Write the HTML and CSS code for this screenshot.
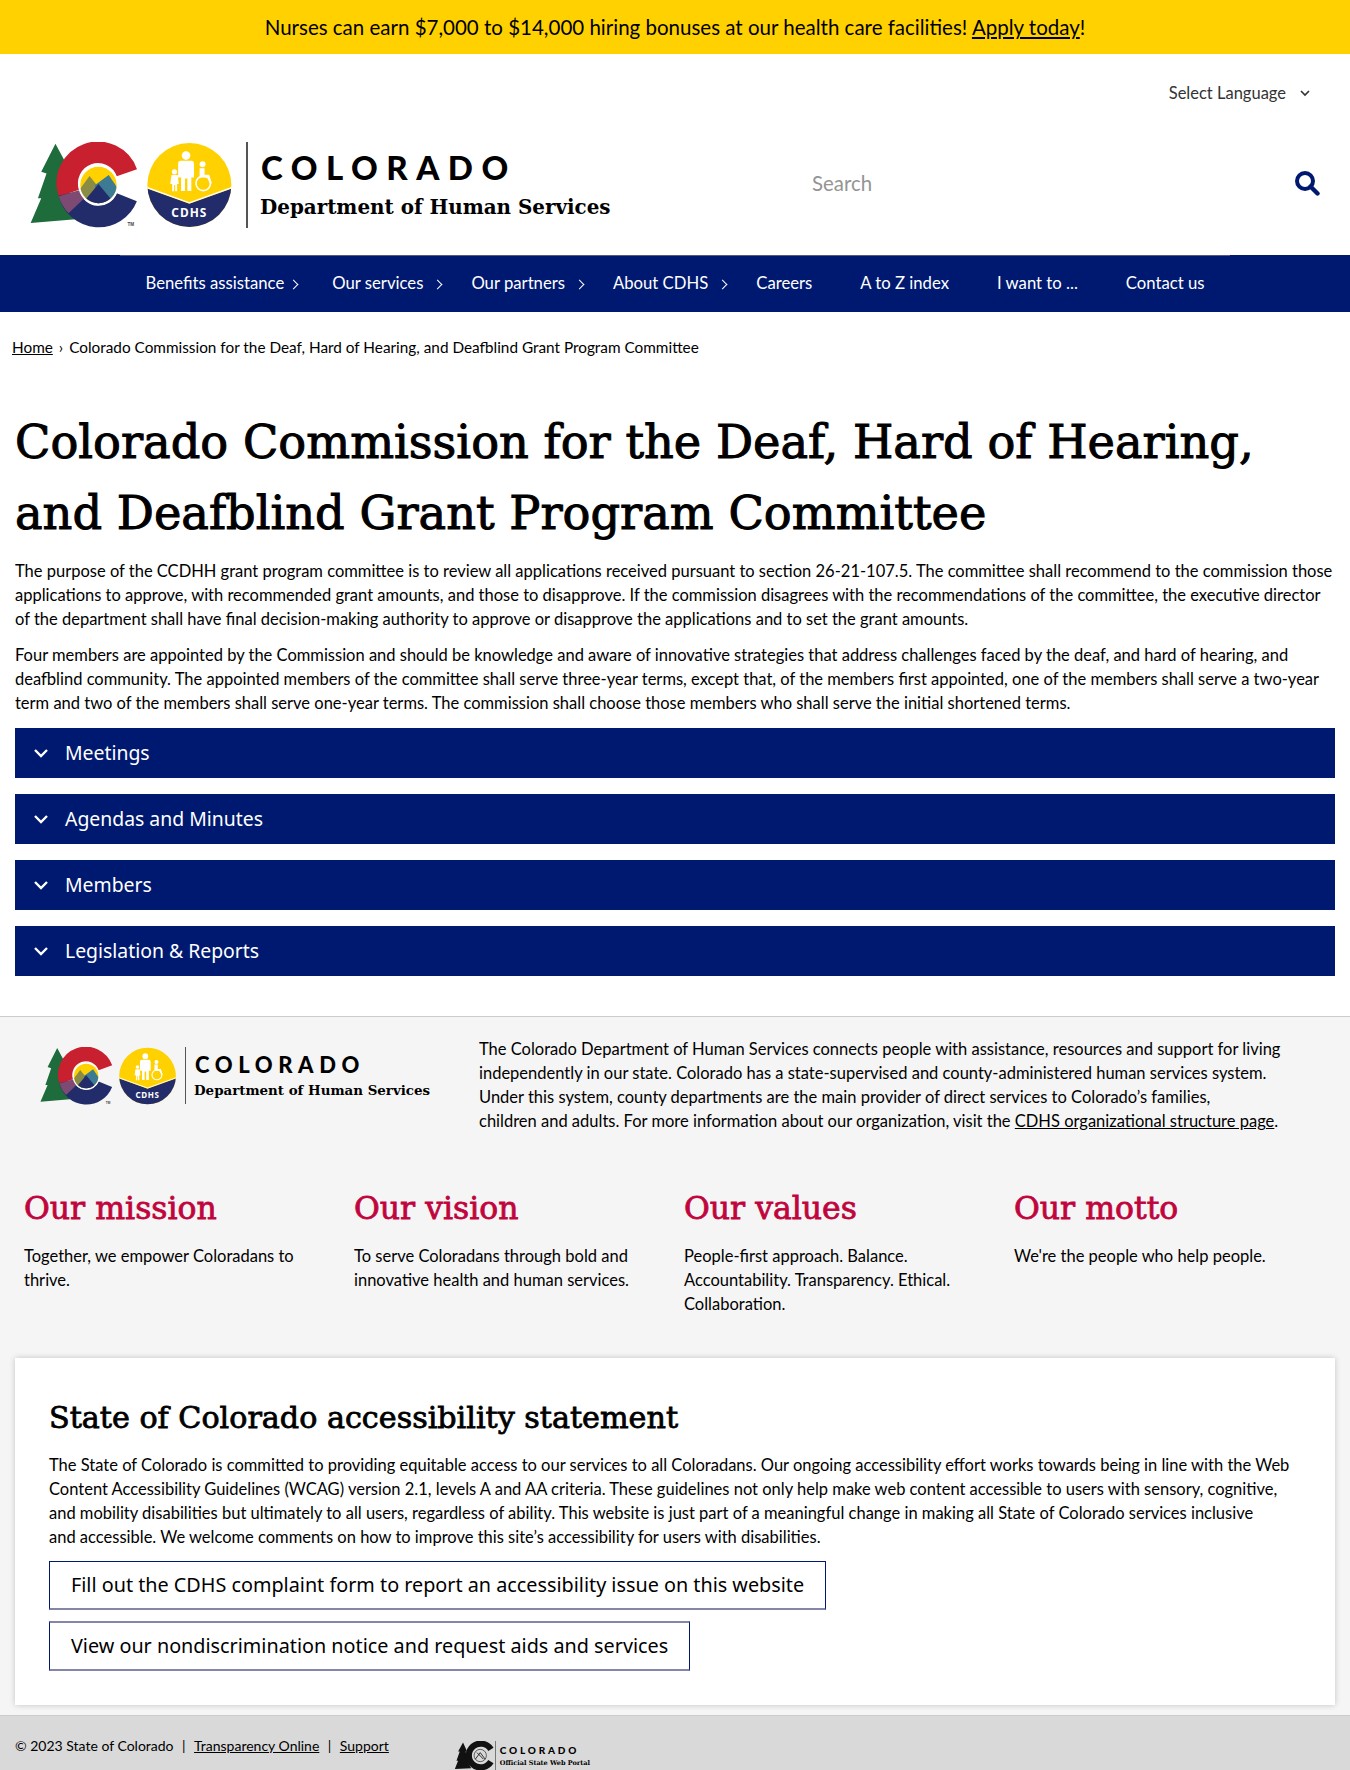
FILE: index.html
```html
<!DOCTYPE html>
<html lang="en">
<head>
    <meta charset="UTF-8">
    <meta name="viewport" content="width=device-width, initial-scale=1.0">
    <title>Colorado Commission for the Deaf, Hard of Hearing, and Deafblind Grant Program Committee</title>
    <link rel="stylesheet" href="styles.css">
</head>
<body>

    <!-- shared logo marks -->
    <svg class="defs" width="0" height="0" aria-hidden="true">
        <defs>
            <clipPath id="sunClip"><circle cx="235" cy="165" r="55"/></clipPath>
            <clipPath id="badgeClip"><circle cx="510" cy="165" r="127"/></clipPath>
            <symbol id="coMark" viewBox="25 35 620 260">
                <path fill="#1e6b3c" d="M105 40 L140 105 L128 105 L150 170 L140 170 L175 268 L30 280 L62 205 L52 205 L78 130 L62 125 Z"/>
                <path fill="none" stroke="#c8202f" stroke-width="65" d="M321 128 A92 92 0 1 0 146 190"/>
                <path fill="none" stroke="#232c6b" stroke-width="65" d="M321 202 A92 92 0 0 1 146 190"/>
                <path fill="none" stroke="#7d4a73" stroke-width="65" d="M146 190 A92 92 0 0 0 168 228"/>
                <circle cx="235" cy="165" r="61" fill="#fff"/>
                <g clip-path="url(#sunClip)">
                    <rect x="170" y="100" width="130" height="130" fill="#ffd100"/>
                    <path fill="#8a8c45" d="M170 190 L208 138 L250 190 V230 H170 Z"/>
                    <path fill="#3d7a94" d="M225 165 L266 135 L300 185 V230 H225 Z"/>
                    <path fill="#232c6b" d="M170 240 L235 162 L300 240 Z"/>
                </g>
                <text x="323" y="290" class="tm">TM</text>
                <g clip-path="url(#badgeClip)">
                    <rect x="380" y="35" width="260" height="260" fill="#ffd100"/>
                    <path fill="#232c6b" d="M380 175 L510 222 L640 175 V295 H380 Z"/>
                    <path fill="none" stroke="#fff" stroke-width="4" d="M380 172 L510 219 L640 172"/>
                </g>
                <g fill="#fff">
                    <circle cx="500" cy="76" r="13"/>
                    <path d="M484 92 H516 Q524 92 524 102 V142 H516 V183 H504 V145 H497 V183 H485 V142 H476 V102 Q476 92 484 92 Z"/>
                    <circle cx="465" cy="125" r="8"/>
                    <path d="M456 135 H475 L478 162 H473 V184 H467 V165 H464 V184 H458 V162 H452 Z"/>
                    <circle cx="550" cy="102" r="9"/>
                    <path d="M541 114 H556 V134 H570 L578 160 H571 L565 142 H541 Z"/>
                </g>
                <circle cx="552" cy="160" r="22" fill="none" stroke="#fff" stroke-width="5"/>
                <text x="510" y="263" text-anchor="middle" class="badge-text">CDHS</text>
            </symbol>
            <symbol id="portalMark" viewBox="0 0 100 70">
                <path fill="#111" d="M22 3 L32 25 L28 25 L36 48 L32 48 L42 66 L2 68 L10 48 L6 48 L14 25 L10 25 Z"/>
                <path fill="none" stroke="#111" stroke-width="15" d="M90 20 A29 29 0 1 0 90 50"/>
                <circle cx="64" cy="35" r="16" fill="#d9d9d9"/>
                <circle cx="64" cy="35" r="15" fill="none" stroke="#111" stroke-width="1.5"/>
                <path fill="none" stroke="#111" stroke-width="2" d="M52 44 L64 28 L76 44 M56 28 L72 44"/>
            </symbol>
        </defs>
    </svg>

    <!-- top banner -->
    <div class="banner">
        Nurses can earn $7,000 to $14,000 hiring bonuses at our health care facilities! <a href="#">Apply today</a>!
    </div>

    <header class="site-header">
        <div class="lang-row">
            <span class="lang-select">Select Language
                <svg class="lang-caret" viewBox="0 0 12 8"><path d="M2 2 L6 6 L10 2" fill="none" stroke="#333" stroke-width="1.6"/></svg>
            </span>
        </div>
        <div class="brand-row">
            <a class="logo" href="#">
                <svg class="logo-mark"><use href="#coMark"/></svg>
                <span class="logo-text">
                    <span class="logo-state">COLORADO</span>
                    <span class="logo-dept">Department of Human Services</span>
                </span>
            </a>
            <div class="search">
                <span class="search-hint">Search</span>
                <svg class="search-icon" viewBox="0 0 26 26">
                    <circle cx="11" cy="11" r="8" fill="none" stroke="#001970" stroke-width="4"/>
                    <path d="M16.5 16.5 L23.5 23.5" stroke="#001970" stroke-width="4.4" stroke-linecap="round"/>
                </svg>
            </div>
        </div>
    </header>

    <nav class="main-nav">
        <a href="#" class="nav-link has-sub">Benefits assistance</a>
        <a href="#" class="nav-link has-sub">Our services</a>
        <a href="#" class="nav-link has-sub">Our partners</a>
        <a href="#" class="nav-link has-sub">About CDHS</a>
        <a href="#" class="nav-link">Careers</a>
        <a href="#" class="nav-link">A to Z index</a>
        <a href="#" class="nav-link">I want to ...</a>
        <a href="#" class="nav-link">Contact us</a>
    </nav>

    <div class="breadcrumb">
        <a href="#">Home</a><span class="crumb-sep">›</span>Colorado Commission for the Deaf, Hard of Hearing, and Deafblind Grant Program Committee
    </div>

    <main class="content">
        <h1>Colorado Commission for the Deaf, Hard of Hearing, and Deafblind Grant Program Committee</h1>
        <p>The purpose of the CCDHH grant program committee is to review all applications received pursuant to section 26-21-107.5. The committee shall recommend to the commission those applications to approve, with recommended grant amounts, and those to disapprove. If the commission disagrees with the recommendations of the committee, the executive director of the department shall have final decision-making authority to approve or disapprove the applications and to set the grant amounts.</p>
        <p>Four members are appointed by the Commission and should be knowledge and aware of innovative strategies that address challenges faced by the deaf, and hard of hearing, and deafblind community. The appointed members of the committee shall serve three-year terms, except that, of the members first appointed, one of the members shall serve a two-year term and two of the members shall serve one-year terms. The commission shall choose those members who shall serve the initial shortened terms.</p>

        <div class="accordion">
            <div class="acc-item"><svg class="acc-caret" viewBox="0 0 16 10"><path d="M2 2 L8 8 L14 2" fill="none" stroke="#fff" stroke-width="2.4"/></svg>Meetings</div>
            <div class="acc-item"><svg class="acc-caret" viewBox="0 0 16 10"><path d="M2 2 L8 8 L14 2" fill="none" stroke="#fff" stroke-width="2.4"/></svg>Agendas and Minutes</div>
            <div class="acc-item"><svg class="acc-caret" viewBox="0 0 16 10"><path d="M2 2 L8 8 L14 2" fill="none" stroke="#fff" stroke-width="2.4"/></svg>Members</div>
            <div class="acc-item"><svg class="acc-caret" viewBox="0 0 16 10"><path d="M2 2 L8 8 L14 2" fill="none" stroke="#fff" stroke-width="2.4"/></svg>Legislation &amp; Reports</div>
        </div>
    </main>

    <footer class="site-footer">
        <div class="footer-about">
            <a class="logo logo-small" href="#">
                <svg class="logo-mark"><use href="#coMark"/></svg>
                <span class="logo-text">
                    <span class="logo-state">COLORADO</span>
                    <span class="logo-dept">Department of Human Services</span>
                </span>
            </a>
            <p>The Colorado Department of Human Services connects people with assistance, resources and support for living independently in our state. Colorado has a state-supervised and county-administered human services system. Under this system, county departments are the main provider of direct services to Colorado’s families,<br>children and adults. For more information about our organization, visit the <a href="#">CDHS organizational structure page</a>.</p>
        </div>

        <div class="footer-columns">
            <div class="footer-col">
                <h2>Our mission</h2>
                <p>Together, we empower Coloradans to thrive.</p>
            </div>
            <div class="footer-col">
                <h2>Our vision</h2>
                <p>To serve Coloradans through bold and innovative health and human services.</p>
            </div>
            <div class="footer-col">
                <h2>Our values</h2>
                <p>People-first approach. Balance. Accountability. Transparency. Ethical. Collaboration.</p>
            </div>
            <div class="footer-col">
                <h2>Our motto</h2>
                <p>We're the people who help people.</p>
            </div>
        </div>

        <section class="a11y-card">
            <h2>State of Colorado accessibility statement</h2>
            <p>The State of Colorado is committed to providing equitable access to our services to all Coloradans. Our ongoing accessibility effort works towards being in line with the Web Content Accessibility Guidelines (WCAG) version 2.1, levels A and AA criteria. These guidelines not only help make web content accessible to users with sensory, cognitive, and mobility disabilities but ultimately to all users, regardless of ability. This website is just part of a meaningful change in making all State of Colorado services inclusive<br>and accessible. We welcome comments on how to improve this site’s accessibility for users with disabilities.</p>
            <a class="outline-btn" href="#">Fill out the CDHS complaint form to report an accessibility issue on this website</a>
            <a class="outline-btn" href="#">View our nondiscrimination notice and request aids and services</a>
        </section>

        <div class="legal-bar">
            <div class="legal-links">© 2023 State of Colorado<span class="pipe">|</span><a href="#">Transparency Online</a><span class="pipe">|</span><a href="#">Support</a></div>
            <a class="portal-logo" href="#">
                <svg class="portal-mark"><use href="#portalMark"/></svg>
                <span class="portal-text">
                    <span class="portal-state">COLORADO</span>
                    <span class="portal-sub">Official State Web Portal</span>
                </span>
            </a>
        </div>
    </footer>

</body>
</html>
```

FILE: styles.css
```css
* {
    box-sizing: border-box;
}

body {
    margin: 0;
    font-family: "Lato", Arial, sans-serif;
    font-size: 16.5px;
    line-height: 24px;
    color: #000;
    background: #fff;
}

a {
    color: inherit;
}

p {
    margin: 0 0 12px;
}

.defs {
    position: absolute;
}

.tm {
    font: 700 14px "Liberation Sans", sans-serif;
    fill: #444;
}

.badge-text {
    font: 700 36px "Noto Sans", sans-serif;
    letter-spacing: 3px;
    fill: #fff;
}

.banner {
    height: 54px;
    line-height: 54px;
    background-color: #ffd100;
    text-align: center;
    font-size: 20.5px;
}

.site-header {
    height: 201px;
    padding: 0 30px;
}

.lang-row {
    display: flex;
    justify-content: flex-end;
    padding: 27px 9px 0 0;
    height: 88px;
}

.lang-select {
    display: flex;
    align-items: center;
    gap: 13px;
    height: 24px;
    color: #333;
}

.lang-caret {
    width: 12px;
    height: 8px;
}

.brand-row {
    display: flex;
    justify-content: space-between;
    align-items: center;
}

.logo {
    display: flex;
    align-items: stretch;
    height: 86px;
    text-decoration: none;
    color: #000;
}

.logo-mark {
    width: 205px;
    height: 86px;
    margin-left: -1px;
}

.logo-text {
    display: flex;
    flex-direction: column;
    margin-left: 12px;
    padding-left: 13px;
    border-left: 2px solid #555;
}

.logo-state {
    font: 900 33px/38px "Lato", sans-serif;
    letter-spacing: 8.5px;
    margin-top: 6px;
}

.logo-dept {
    font: 700 19.9px/30px "DejaVu Serif", serif;
    margin: 6px 0 0 -1px;
    white-space: nowrap;
}

.logo-small {
    height: 57px;
}

.logo-small .logo-mark {
    width: 139px;
    height: 58px;
}

.logo-small .logo-text {
    margin-left: 7px;
    padding-left: 9px;
    border-left: 1px solid #555;
}

.logo-small .logo-state {
    font-size: 22px;
    line-height: 25px;
    letter-spacing: 5.6px;
    margin-top: 5px;
}

.logo-small .logo-dept {
    font-size: 13.4px;
    line-height: 20px;
    margin-top: 3px;
}

.search {
    display: flex;
    align-items: center;
    justify-content: space-between;
    width: 508px;
    font-size: 20.4px;
    color: #949494;
    margin-top: -4px;
}

.search-icon {
    width: 26px;
    height: 26px;
}

.main-nav {
    display: flex;
    justify-content: center;
    position: relative;
    height: 57px;
    background-color: #001970;
    padding-top: 16px;
    color: #fff;
    font-size: 16.7px;
}

.main-nav::before {
    content: "";
    position: absolute;
    top: 0;
    left: 120px;
    right: 120px;
    height: 1px;
    background-color: #55597f;
}

.nav-link {
    color: #fff;
    text-decoration: none;
    padding: 0 24px;
    position: relative;
}

.has-sub::after {
    content: "";
    position: absolute;
    right: 6px;
    top: 10px;
    width: 6px;
    height: 6px;
    border-top: 1.6px solid #fff;
    border-right: 1.6px solid #fff;
    transform: rotate(45deg);
}

.nav-link:first-child::after {
    right: 11px;
}

.breadcrumb {
    padding: 23px 12px 0;
    height: 95px;
    font-size: 15.33px;
}

.crumb-sep {
    margin: 0 6px;
}

.content {
    padding: 0 15px 40px;
}

h1 {
    margin: 0 0 10px;
    font: 400 46.3px/71px "DejaVu Serif", serif;
    -webkit-text-stroke: 1px #000;
}

.accordion {
    display: flex;
    flex-direction: column;
    gap: 16px;
    margin-top: 13px;
}

.acc-item {
    display: flex;
    align-items: center;
    height: 50px;
    padding-left: 18px;
    background-color: #001970;
    color: #fff;
    font-family: "Noto Sans", sans-serif;
    font-size: 19.4px;
}

.acc-caret {
    width: 16px;
    height: 10px;
    margin-right: 16px;
}

.site-footer {
    background-color: #f5f5f5;
    border-top: 1px solid #ccc;
}

.footer-about {
    display: flex;
    align-items: flex-start;
    padding: 20px 40px 0;
}

.footer-about .logo {
    margin-top: 10px;
}

.footer-about p {
    margin: 0 0 0 49px;
    flex: 1;
}

.footer-columns {
    display: grid;
    grid-template-columns: repeat(4, 330px);
    padding: 52px 0 0 24px;
    height: 225px;
}

.footer-col {
    padding-right: 30px;
}

.footer-col h2 {
    margin: 0 0 13px;
    font: 400 31.5px/46px "DejaVu Serif", serif;
    -webkit-text-stroke: 0.8px #c0043c;
    color: #c0043c;
}

.a11y-card {
    margin: 0 15px;
    padding: 37px 34px 34px;
    background: #fff;
    box-shadow: 0 0 6px rgba(0, 0, 0, 0.2);
}

.a11y-card h2 {
    margin: 0 0 12px;
    font: 400 30.2px/46px "DejaVu Serif", serif;
    -webkit-text-stroke: 0.8px #000;
}

.outline-btn {
    display: table;
    height: 48px;
    line-height: 46px;
    margin-bottom: 11px;
    padding: 0 21px;
    border: 1px solid #001970;
    border-bottom: 2px solid #8486a8;
    font-family: "Noto Sans", sans-serif;
    font-size: 19.8px;
    text-decoration: none;
}

.outline-btn:last-child {
    margin-bottom: 0;
    border-top: 2px solid #8486a8;
}

.legal-bar {
    display: flex;
    align-items: flex-start;
    height: 56px;
    margin-top: 10px;
    padding: 18px 15px 0;
    background-color: #d9d9d9;
    border-top: 1px solid #ccc;
    font-size: 14px;
}

.pipe {
    margin: 0 8.5px;
}

.portal-logo {
    display: flex;
    margin: 7px 0 0 65px;
    text-decoration: none;
    color: #000;
}

.portal-mark {
    width: 41px;
    height: 29px;
}

.portal-text {
    display: flex;
    flex-direction: column;
    padding-left: 4px;
    border-left: 1px solid #777;
    height: 29px;
}

.portal-state {
    font: 900 10px/12px "Lato", sans-serif;
    letter-spacing: 2.8px;
    margin-top: 3px;
}

.portal-sub {
    font: 700 6.5px/14px "DejaVu Serif", serif;
    white-space: nowrap;
}
```
